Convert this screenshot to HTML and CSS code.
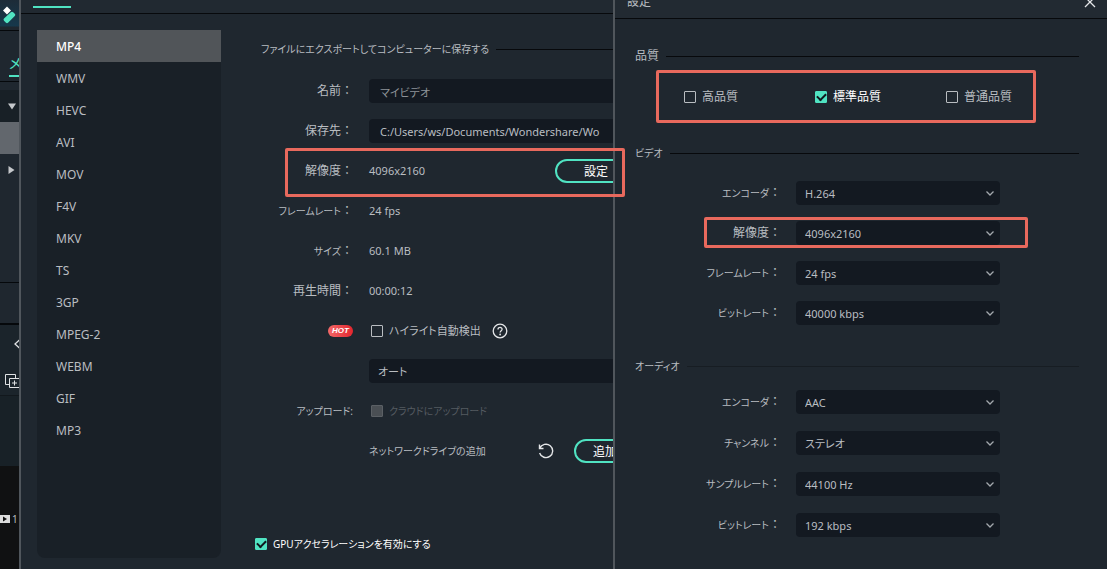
FILE: index.html
```html
<!DOCTYPE html>
<html lang="ja">
<head>
<meta charset="utf-8">
<title>エクスポート</title>
<link rel="stylesheet" href="styles.css">
</head>
<body>
<div class="workspace">
  <aside class="strip">
    <div class="strip-logo">
      <svg width="19" height="27" viewBox="0 0 19 27" aria-hidden="true"><path d="M7 6.500L11 10.500L7 14.500L3 10.500Z" fill="#fff"/><path d="M10.800 12.300Q12 11.200 13.200 12.300L15 14Q15.700 15 14.800 16L8 22.800Q7 23.600 6 22.800L4 20.800Q3 19.500 4 18.500Z" fill="#50e3c2"/></svg>
    </div>
    <div class="strip-tab"><a href="#media">メ</a></div>
    <div class="strip-gap"></div>
    <div class="strip-item strip-open"><svg width="8" height="7" viewBox="0 0 8 7" aria-hidden="true"><path d="M0 0.500H8L4 6.500Z" fill="#c5c8cb"/></svg></div>
    <div class="strip-item strip-selected"></div>
    <div class="strip-item strip-closed"><svg width="7" height="8" viewBox="0 0 7 8" aria-hidden="true"><path d="M0.500 0V8L6.500 4Z" fill="#c5c8cb"/></svg></div>
    <div class="strip-block"></div>
    <div class="strip-tools">
      <svg width="6" height="10" viewBox="0 0 6 10" aria-hidden="true"><path d="M5.500 1L1 5L5.500 9" fill="none" stroke="#e0e2e4" stroke-width="1.300"/></svg>
      <svg width="15" height="15" viewBox="0 0 15 15" aria-hidden="true"><path d="M4 10.500H0.500V0.500H10.500V4M4.500 4.500H14.500V13.500H4.500ZM9.500 6.500V11.500M7 9H12" fill="none" stroke="#e0e2e4"/></svg>
    </div>
    <div class="strip-tracks"></div>
    <div class="strip-timeline">
      <svg width="10" height="8" viewBox="0 0 10 8" aria-hidden="true"><path d="M0 0H10V8H0Z" fill="#dcdcdc"/><path d="M3 1.500L7 4L3 6.500Z" fill="#111"/></svg>
      <span>1</span>
    </div>
  </aside>

  <main class="export">
    <header class="export-head"><span class="tab-mark"></span></header>
    <div class="export-body">
      <nav class="formats">
        <a class="current" href="#mp4">MP4</a>
        <a href="#wmv">WMV</a>
        <a href="#hevc">HEVC</a>
        <a href="#avi">AVI</a>
        <a href="#mov">MOV</a>
        <a href="#f4v">F4V</a>
        <a href="#mkv">MKV</a>
        <a href="#ts">TS</a>
        <a href="#3gp">3GP</a>
        <a href="#mpeg2">MPEG-2</a>
        <a href="#webm">WEBM</a>
        <a href="#gif">GIF</a>
        <a href="#mp3">MP3</a>
      </nav>
      <form class="details">
        <h2 class="rule details-title kana">ファイルにエクスポートしてコンピューターに保存する</h2>
        <div class="row">
          <label class="name" for="name">名前<span class="colon">：</span></label>
          <input class="field dim" id="name" type="text" value="マイビデオ">
        </div>
        <div class="row">
          <label class="name" for="path">保存先<span class="colon">：</span></label>
          <input class="field" id="path" type="text" value="C:/Users/ws/Documents/Wondershare/Wo">
        </div>
        <div class="row marked">
          <span class="name">解像度<span class="colon">：</span></span>
          <span class="value">4096x2160</span>
          <button class="pill pill-set" type="button">設定</button>
          <span class="highlight highlight-row"></span>
        </div>
        <div class="row">
          <span class="name kana">フレームレート<span class="colon">：</span></span>
          <span class="value">24 fps</span>
        </div>
        <div class="row">
          <span class="name kana">サイズ<span class="colon">：</span></span>
          <span class="value">60.1 MB</span>
        </div>
        <div class="row">
          <span class="name">再生時間<span class="colon">：</span></span>
          <span class="value">00:00:12</span>
        </div>
        <div class="row">
          <span class="name tag"><span class="hot">HOT</span></span>
          <label class="check"><input type="checkbox">ハイライト自動検出</label>
          <svg class="help" width="16" height="16" viewBox="0 0 16 16" aria-hidden="true"><g fill="none" stroke="#e4e6e8" stroke-width="1.300"><circle cx="8" cy="8" r="6.800"/><path d="M6 6.500C6 3.700 10.200 3.900 10.100 6.300C10 7.700 8.100 7.700 8.100 9.600"/></g><circle cx="8.100" cy="11.500" r=".9" fill="#e4e6e8"/></svg>
        </div>
        <div class="row">
          <span class="name"></span>
          <select class="field auto" aria-label="ハイライト"><option>オート</option></select>
        </div>
        <div class="row">
          <span class="name kana">アップロード:</span>
          <label class="check disabled kana"><input type="checkbox" disabled>クラウドにアップロード</label>
        </div>
        <div class="row">
          <span class="name"></span>
          <span class="value drive kana">ネットワークドライブの追加</span>
          <button class="icon-button reload" type="button" aria-label="更新"><svg width="16" height="16" viewBox="0 0 16 16" aria-hidden="true"><path d="M1.500 1.500V5.500H5.500M1.800 5.300A6.700 6.700 0 1 1 1.600 10" fill="none" stroke="#e4e6e8" stroke-width="1.400"/></svg></button>
          <button class="pill pill-add" type="button">追加</button>
        </div>
        <label class="check gpu kana"><input type="checkbox" checked>GPUアクセラレーションを有効にする</label>
      </form>
    </div>
  </main>

  <section class="settings">
    <header class="settings-head">
      <span>設定</span>
      <button class="icon-button" type="button" aria-label="閉じる"><svg width="12" height="12" viewBox="0 0 12 12" aria-hidden="true"><path d="M1 1L11 11M11 1L1 11" stroke="#e4e6e8" stroke-width="1.300"/></svg></button>
    </header>
    <form class="settings-body">
      <h2 class="rule">品質</h2>
      <div class="quality">
        <label class="check"><input type="checkbox">高品質</label>
        <label class="check on"><input type="checkbox" checked>標準品質</label>
        <label class="check"><input type="checkbox">普通品質</label>
        <span class="highlight highlight-quality"></span>
      </div>
      <h2 class="rule video-title kana">ビデオ</h2>
      <div class="group video">
        <div class="option"><label class="name kana" for="venc">エンコーダ<span class="colon">：</span></label><span class="picker"><select id="venc"><option>H.264</option></select><svg width="8" height="5" viewBox="0 0 8 5" aria-hidden="true"><path d="M0.500 0.500L4 4L7.500 0.500"/></svg></span></div>
        <div class="option marked"><label class="name" for="vres">解像度<span class="colon">：</span></label><span class="picker"><select id="vres"><option>4096x2160</option></select><svg width="8" height="5" viewBox="0 0 8 5" aria-hidden="true"><path d="M0.500 0.500L4 4L7.500 0.500"/></svg></span><span class="highlight highlight-option"></span></div>
        <div class="option"><label class="name kana" for="vfps">フレームレート<span class="colon">：</span></label><span class="picker"><select id="vfps"><option>24 fps</option></select><svg width="8" height="5" viewBox="0 0 8 5" aria-hidden="true"><path d="M0.500 0.500L4 4L7.500 0.500"/></svg></span></div>
        <div class="option"><label class="name kana" for="vbit">ビットレート<span class="colon">：</span></label><span class="picker"><select id="vbit"><option>40000 kbps</option></select><svg width="8" height="5" viewBox="0 0 8 5" aria-hidden="true"><path d="M0.500 0.500L4 4L7.500 0.500"/></svg></span></div>
      </div>
      <h2 class="rule faint audio-title kana">オーディオ</h2>
      <div class="group audio">
        <div class="option"><label class="name kana" for="aenc">エンコーダ<span class="colon">：</span></label><span class="picker"><select id="aenc"><option>AAC</option></select><svg width="8" height="5" viewBox="0 0 8 5" aria-hidden="true"><path d="M0.500 0.500L4 4L7.500 0.500"/></svg></span></div>
        <div class="option"><label class="name kana" for="ach">チャンネル<span class="colon">：</span></label><span class="picker"><select id="ach"><option>ステレオ</option></select><svg width="8" height="5" viewBox="0 0 8 5" aria-hidden="true"><path d="M0.500 0.500L4 4L7.500 0.500"/></svg></span></div>
        <div class="option"><label class="name kana" for="arate">サンプルレート<span class="colon">：</span></label><span class="picker"><select id="arate"><option>44100 Hz</option></select><svg width="8" height="5" viewBox="0 0 8 5" aria-hidden="true"><path d="M0.500 0.500L4 4L7.500 0.500"/></svg></span></div>
        <div class="option"><label class="name kana" for="abit">ビットレート<span class="colon">：</span></label><span class="picker"><select id="abit"><option>192 kbps</option></select><svg width="8" height="5" viewBox="0 0 8 5" aria-hidden="true"><path d="M0.500 0.500L4 4L7.500 0.500"/></svg></span></div>
      </div>
    </form>
  </section>
</div>
</body>
</html>
```
FILE: styles.css
```css
* { box-sizing: border-box; }

body {
  margin: 0;
  background: #1f272f;
  color: #b9bdc1;
  font: 12px/16px "Noto Sans", "Noto Sans CJK JP", sans-serif;
  font-feature-settings: "palt";
  overflow: hidden;
}

input, select, button {
  margin: 0;
  color: inherit;
  font: inherit;
  font-feature-settings: inherit;
}

h2 { margin: 0; font-size: 12px; font-weight: 400; }
a { color: inherit; text-decoration: none; }
svg { display: block; flex: none; }

.workspace {
  display: grid;
  grid-template-columns: 19px minmax(0, 1fr) 494px;
  min-height: 100vh;
}

/* Editor strip behind the dialogs */
.strip {
  display: flex;
  flex-direction: column;
  overflow: hidden;
}
.strip-logo { height: 31px; border-bottom: 1px solid #05080b; background: linear-gradient(#1d2b38, #16384c 26px, #1f272f 27px); }
.strip-tab { height: 51px; padding: 24px 0 0 9px; border-bottom: 1px solid #05080b; color: #50e3c2; font-size: 14px; }
.strip-tab a { display: block; height: 22px; border-bottom: 2px solid #50e3c2; line-height: 16px; }
.strip-gap { height: 8px; }
.strip-item { display: flex; align-items: center; height: 32px; padding-left: 8px; }
.strip-open { background: #182026; }
.strip-selected { background: #62676d; }
.strip-closed { height: 129px; padding-bottom: 97px; border-bottom: 1px solid #05080b; }
.strip-block { height: 42px; border-bottom: 2px solid #05080b; }
.strip-tools { display: flex; flex-direction: column; gap: 25px; height: 71px; padding: 14px 0 0 5px; border-bottom: 1px solid #12181d; background: #1b242b; }
.strip-tools svg:first-child { margin-left: 9px; }
.strip-tracks { height: 70px; background: #182127; }
.strip-timeline { display: flex; flex: 1; align-items: flex-start; gap: 2px; padding-top: 49px; background: #101112; font-size: 10px; line-height: 8px; }

/* Export dialog */
.export {
  display: flex;
  flex-direction: column;
  min-width: 0;
  border-left: 2px solid #50565c;
}
.export-head { height: 14px; padding: 6px 0 0 12px; border-bottom: 1px solid #07090c; background: #212931; }
.tab-mark { display: block; width: 38px; height: 2px; background: #50e3c2; }
.export-body { display: flex; flex: 1; gap: 34px; padding: 16px 0 11px 16px; }

.formats { flex: none; width: 184px; border-radius: 4px 4px 8px 8px; background: #192027; }
.formats a { display: block; padding: 9px 19px 7px; }
.formats .current { background: #515559; color: #fff; font-weight: 500; }

.details { flex: 1; min-width: 0; }
.rule { display: flex; align-items: center; gap: 7px; }
.rule::after { content: ""; flex: 1; height: 1px; background: #07090c; }
.faint::after { background: #171d23; }
.details-title { padding: 11px 0 14px 6px; }

.row { display: flex; align-items: center; height: 40px; }
.name { flex: none; text-align: right; }
.row .name { width: 98px; margin-right: 16px; }
.row .tag { display: flex; justify-content: flex-end; }
.colon { font-size: 12px; font-feature-settings: normal; }
.marked, .quality { position: relative; }

.field {
  flex: 1;
  min-width: 0;
  height: 24px;
  padding: 1px 9px 0 11px;
  border: 0;
  border-radius: 4px 0 0 4px;
  background: #131921;
  font-size: 11px;
}
.auto { padding-left: 9px; appearance: none; }
.dim { color: #8e9398; }
.value { flex: none; width: 186px; font-size: 11px; }
.drive { width: 169px; }

.pill {
  flex: none;
  height: 24px;
  padding: 1px 0 0;
  border: 2px solid #50e3c2;
  border-radius: 12px;
  background: transparent;
  color: #fff;
}
.pill-set { width: 82px; }
.pill-add { width: 62px; margin-left: 20px; }
.icon-button { flex: none; padding: 0; border: 0; background: none; }

.hot {
  width: 25px;
  border-radius: 6px;
  background: linear-gradient(90deg, #f26868, #e3262e);
  color: #fff;
  font: italic 700 8px/12px "Liberation Sans", sans-serif;
  text-align: center;
}

.check { display: flex; align-items: center; gap: 6px; }
.row .check { padding-left: 2px; font-size: 11px; }
.check input {
  display: grid;
  flex: none;
  place-items: center;
  width: 12px;
  height: 12px;
  border: 1px solid #b9bdc1;
  border-radius: 1px;
  appearance: none;
}
.check input:checked { border-color: #50e3c2; background: #50e3c2; }
.check input:checked::before {
  content: "";
  width: 7px;
  height: 4px;
  margin-bottom: 2px;
  border: solid #10181d;
  border-width: 0 0 2px 2px;
  transform: rotate(-45deg);
}
.check input:disabled { border-color: #5b6065; background: #4a4f54; }
.disabled { color: #555b61; }
.on, .gpu { color: #fff; }
.help { margin-left: 11px; }
.gpu { margin-top: 65px; }

/* Lines made mostly of kana are set smaller */
.kana, .row .kana { font-size: 10px; }

/* Settings dialog, lying over the right part of the export dialog */
.settings {
  z-index: 1;
  border-left: 2px solid #50565c;
  background: #1f272f;
}
.settings-head {
  display: flex;
  justify-content: space-between;
  align-items: flex-start;
  height: 19px;
  padding: 0 11px 0 12px;
  border-bottom: 1px solid #07090c;
  background: #222a32;
}
.settings-head span { margin-top: -6px; }
.settings-head .icon-button { margin-top: -4px; }
.settings-body { padding: 29px 28px 31px 20px; }

.quality { display: grid; grid-template-columns: repeat(3, 131px); padding: 25px 0 0 49px; }
.video-title { padding-top: 40px; }
.audio-title { padding-top: 33px; }
.group { display: flex; flex-direction: column; }
.video { gap: 16px; padding-top: 20px; }
.audio { gap: 17px; padding-top: 16px; }
.option { display: flex; align-items: center; }
.option .name { width: 146px; margin-right: 15px; }
.picker { display: grid; flex: 0 1 204px; align-items: center; }
.picker select, .picker svg { grid-area: 1 / 1; }
.picker select {
  height: 24px;
  padding: 2px 24px 0 9px;
  border: 0;
  border-radius: 4px;
  background: #131921;
  font-size: 11px;
  appearance: none;
}
.picker svg { justify-self: end; margin-right: 6px; fill: none; stroke: #a3a8ad; stroke-width: 1.3; pointer-events: none; }

/* Callout frames over the controls */
.highlight { position: absolute; z-index: 2; border: 3px solid #e8695d; border-radius: 2px; pointer-events: none; }
.highlight-row { inset: -3px -12px -6px 30px; }
.highlight-quality { inset: 6px 43px -18px 21px; }
.highlight-option { inset: -4px 51px -3px 69px; }
```
